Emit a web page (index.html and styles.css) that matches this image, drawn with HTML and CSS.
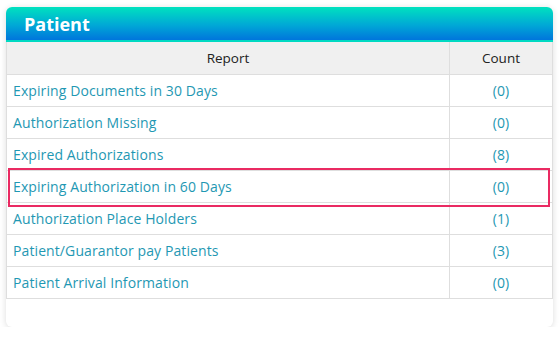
FILE: index.html
```html
<!DOCTYPE html>
<html>
<head>
<meta charset="utf-8">
<link rel="stylesheet" href="styles.css">
</head>
<body>
<div class="card">
  <div class="card-head">Patient</div>
  <table class="report">
    <thead>
      <tr><th class="c-report">Report</th><th class="c-count">Count</th></tr>
    </thead>
    <tbody>
      <tr><td>Expiring Documents in 30 Days</td><td class="num">(0)</td></tr>
      <tr><td>Authorization Missing</td><td class="num">(0)</td></tr>
      <tr><td>Expired Authorizations</td><td class="num">(8)</td></tr>
      <tr class="hl"><td>Expiring Authorization in 60 Days</td><td class="num">(0)</td></tr>
      <tr><td>Authorization Place Holders</td><td class="num">(1)</td></tr>
      <tr><td>Patient/Guarantor pay Patients</td><td class="num">(3)</td></tr>
      <tr><td>Patient Arrival Information</td><td class="num">(0)</td></tr>
    </tbody>
  </table>
  <div class="card-foot"></div>
  <div class="mark"></div>
</div>
</body>
</html>
```
FILE: styles.css
```css
html, body { margin: 0; padding: 0; background: #fff; }
body { font-family: "Open Sans", "Noto Sans", sans-serif; }
.card {
  position: relative;
  margin: 7px 0 0 6px;
  width: 547px;
  background: #fff;
  border-radius: 6px;
  box-shadow: 0 1px 6px rgba(0,0,0,0.14);
}
.card-head {
  height: 33px;
  border-bottom: 2px solid #00d9c2;
  border-radius: 6px 6px 0 0;
  background: linear-gradient(to bottom, #00e2bf 0%, #00a8d6 55%, #0075dc 100%);
  color: #fff;
  font-weight: 700;
  font-size: 18px;
  line-height: 35px;
  padding-left: 18px;
  box-sizing: content-box;
}
.report {
  width: 100%;
  border-collapse: collapse;
  font-size: 14px;
}
.report th {
  background: #f0f0f0;
  color: #222;
  font-weight: 400;
  font-size: 13.5px;
  height: 32px;
  border: 1px solid #dedede;
  border-top: 0;
  padding: 0;
}
.report td {
  height: 31px;
  border: 1px solid #dedede;
  color: #1f98b3;
  padding: 0 0 0 6px;
  letter-spacing: 0.1px;
}
.report td.num { text-align: center; padding: 0; }
.c-count { width: 102px; }
.card-foot { height: 28px; }
.mark {
  position: absolute;
  left: 2px; top: 161px;
  width: 538px; height: 35px;
  border: 2px solid #ea2a62;
}
```
